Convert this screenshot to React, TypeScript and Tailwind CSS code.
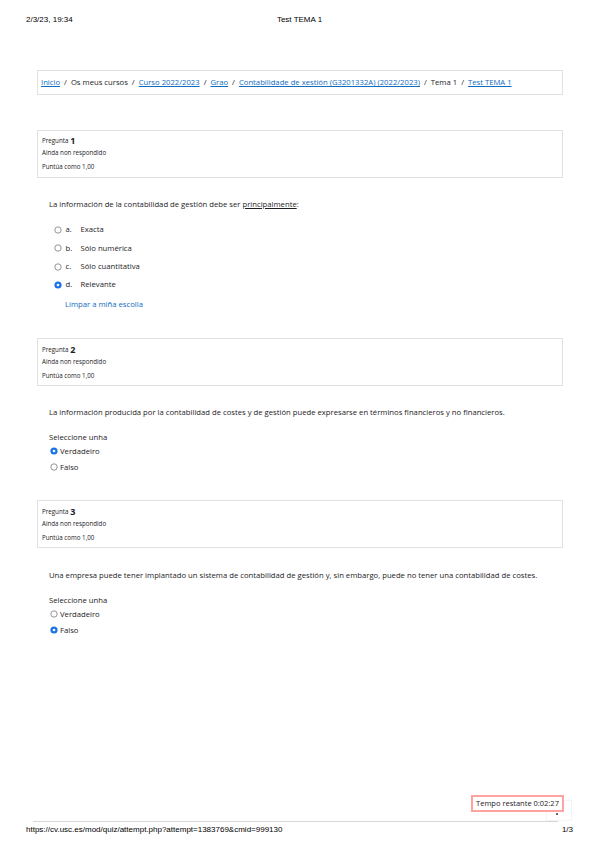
import React from "react";

const Radio = ({ checked }: { checked?: boolean }) => (
  <svg width="8" height="8" viewBox="0 0 8 8" className="shrink-0">
    {checked ? (
      <>
        <circle cx="4" cy="4" r="3.6" fill="#1a73e8" />
        <circle cx="4" cy="4" r="1.3" fill="#ffffff" />
      </>
    ) : (
      <circle cx="4" cy="4" r="3.2" fill="#ffffff" stroke="#7a7a7a" strokeWidth="0.8" />
    )}
  </svg>
);

const InfoBox = ({ n }: { n: number }) => (
  <div className="border border-[#dee2e6] px-[4px] pt-[4px] pb-[4px] text-[6.2px] text-[#1d2125]">
    <div className="h-[12px] flex items-center">
      <span>Pregunta</span>
      <span className="ml-[2px] text-[9px] font-bold">{n}</span>
    </div>
    <div className="h-[12px] flex items-center">Ainda non respondido</div>
    <div className="mt-[2px] h-[12px] flex items-center">Puntúa como 1,00</div>
  </div>
);

const TrueFalse = ({ trueChecked }: { trueChecked: boolean }) => (
  <div>
    <div className="mt-[13px] h-[12px] flex items-center">Seleccione unha</div>
    <div className="h-[16px] flex items-center pl-[0.5px] gap-[2.5px]">
      <Radio checked={trueChecked} />
      <span>Verdadeiro</span>
    </div>
    <div className="h-[16px] flex items-center pl-[0.5px] gap-[2.5px]">
      <Radio checked={!trueChecked} />
      <span>Falso</span>
    </div>
  </div>
);

const Sep = () => <span className="mx-[4px]">/</span>;
const A = ({ children }: { children: React.ReactNode }) => (
  <span className="text-[#0f6cbf] underline">{children}</span>
);

export default function App() {
  const opts = [
    { l: "a.", t: "Exacta" },
    { l: "b.", t: "Sólo numérica" },
    { l: "c.", t: "Sólo cuantitativa" },
    { l: "d.", t: "Relevante", c: true },
  ];
  return (
    <div className="relative w-[599px] min-h-[848px] bg-white flex flex-col text-[#1d2125]" style={{ fontFamily: '"Open Sans", "Noto Sans", sans-serif' }}>
      <div className="grid grid-cols-3 px-[26px] pt-[15px] h-[25px] text-[8px] leading-[10px] text-black" style={{ fontFamily: '"Liberation Sans", Arial, sans-serif' }}>
        <span>2/3/23, 19:34</span>
        <span className="text-center">Test TEMA 1</span>
        <span />
      </div>

      <div className="ml-[37px] mr-[36px] text-[7.7px]">
        <div className="mt-[45px] h-[25px] border border-[#dee2e6] flex items-center pl-[3px] whitespace-nowrap">
          <A>Inicio</A>
          <Sep />
          <span>Os meus cursos</span>
          <Sep />
          <A>Curso 2022/2023</A>
          <Sep />
          <A>Grao</A>
          <Sep />
          <A>Contabilidade de xestión (G3201332A) (2022/2023)</A>
          <Sep />
          <span>Tema 1</span>
          <Sep />
          <A>Test TEMA 1</A>
        </div>

        <div className="mt-[35px]">
          <InfoBox n={1} />
        </div>
        <div className="px-[12px]">
          <div className="mt-[21px] h-[12px] flex items-center">
            <span>
              La información de la contabilidad de gestión debe ser{" "}
              <span className="underline">principalmente</span>:
            </span>
          </div>
          <div className="mt-[10px]">
            {opts.map((o) => (
              <div key={o.l} className="h-[18.33px] flex items-center pl-[4.5px]">
                <Radio checked={o.c} />
                <span className="ml-[4px] w-[15px]">{o.l}</span>
                <span>{o.t}</span>
              </div>
            ))}
          </div>
          <div className="mt-[4px] h-[12px] flex items-center pl-[16px] text-[#0f6cbf]">
            Limpar a miña escolla
          </div>
        </div>

        <div className="mt-[28px]">
          <InfoBox n={2} />
        </div>
        <div className="px-[12px]">
          <div className="mt-[20px] h-[12px] flex items-center whitespace-nowrap">
            La información producida por la contabilidad de costes y de gestión puede expresarse en términos financieros y no financieros.
          </div>
          <TrueFalse trueChecked={true} />
        </div>

        <div className="mt-[25px]">
          <InfoBox n={3} />
        </div>
        <div className="px-[12px]">
          <div className="mt-[21px] h-[12px] flex items-center whitespace-nowrap">
            Una empresa puede tener implantado un sistema de contabilidad de gestión y, sin embargo, puede no tener una contabilidad de costes.
          </div>
          <TrueFalse trueChecked={false} />
        </div>
      </div>

      <div className="mt-auto">
        <div className="ml-[33px] mr-[41px] h-[1px] bg-[#d6d6d6]" />
        <div className="mt-[3px] h-[10px] flex justify-between px-[26px] pb-[13px] box-content text-[8px] leading-[10px] text-black" style={{ fontFamily: '"Liberation Sans", Arial, sans-serif' }}>
          <span>https://cv.usc.es/mod/quiz/attempt.php?attempt=1383769&amp;cmid=999130</span>
          <span>1/3</span>
        </div>
      </div>

      <div className="absolute left-[546px] top-[800px] w-[26px] h-[21px] border border-solid border-gray-100">
        <div className="absolute left-[9px] top-[12px] w-[2px] h-[2px] rounded-full bg-[#333]" />
      </div>
      <div className="absolute left-[471px] top-[795px] w-[93px] h-[17px] border-2 border-solid border-red-300 bg-white flex items-center justify-center text-[7.5px] whitespace-nowrap">
        Tempo restante 0:02:27
      </div>
    </div>
  );
}
